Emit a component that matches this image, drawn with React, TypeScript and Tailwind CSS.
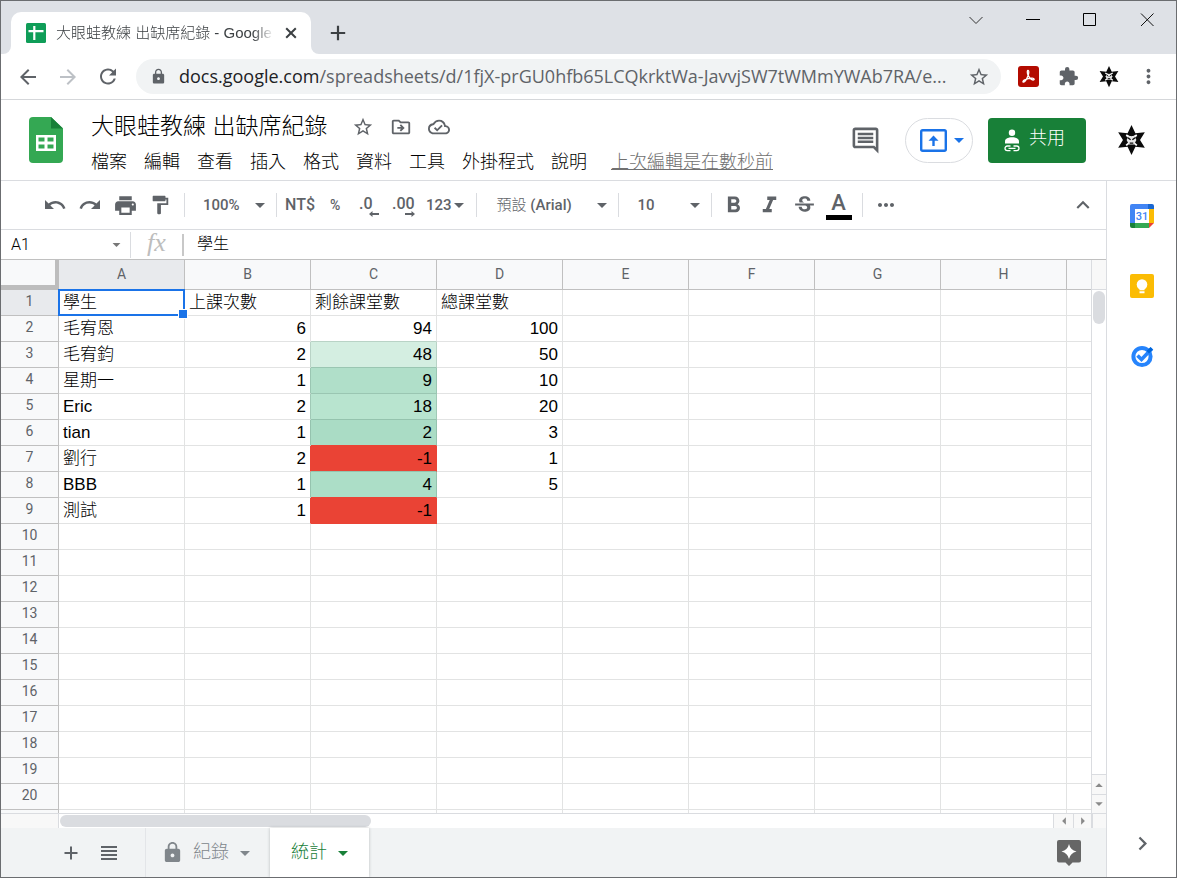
import { clsx } from "clsx";
import type { ReactNode } from "react";
import {
  MdAdd,
  MdArrowBack,
  MdArrowDropDown,
  MdArrowForward,
  MdClose,
  MdExpandLess,
  MdExtension,
  MdFormatBold,
  MdFormatItalic,
  MdFormatPaint,
  MdLock,
  MdChevronRight,
  MdMoreHoriz,
  MdMoreVert,
  MdOutlineCloudDone,
  MdOutlineDriveFileMove,
  MdOutlineInsertComment,
  MdPrint,
  MdRedo,
  MdRefresh,
  MdStarBorder,
  MdStrikethroughS,
  MdUndo,
} from "react-icons/md";

const menus = ["檔案", "編輯", "查看", "插入", "格式", "資料", "工具", "外掛程式", "說明"];
const columns = ["A", "B", "C", "D", "E", "F", "G", "H", "I"];

// `edge` colours the line left of column C, `line` the line below it.
type Row = { cells: string[]; fill?: string; line?: string; edge?: string };

const rows: Row[] = [
  { cells: ["學生", "上課次數", "剩餘課堂數", "總課堂數"] },
  { cells: ["毛宥恩", "6", "94", "100"], line: "border-b-[#b9d3c6]" },
  { cells: ["毛宥鈞", "2", "48", "50"], fill: "bg-[#d4eee1] border-r-[#b9d3c6]", line: "border-b-[#9ac6b2]", edge: "border-r-[#b9d3c6]" },
  { cells: ["星期一", "1", "9", "10"], fill: "bg-[#b0dfc9] border-r-[#9ac6b2]", line: "border-b-[#9ac6b2]", edge: "border-r-[#9ac6b2]" },
  { cells: ["Eric", "2", "18", "20"], fill: "bg-[#b8e4cf] border-r-[#a0c9b6]", line: "border-b-[#95c3ae]", edge: "border-r-[#a0c9b6]" },
  { cells: ["tian", "1", "2", "3"], fill: "bg-[#aadcc5] border-r-[#95c3ae]", line: "border-b-[#ea4335]", edge: "border-r-[#95c3ae]" },
  { cells: ["劉行", "2", "-1", "1"], fill: "bg-[#ea4335] border-r-[#ea4335]", line: "border-b-[#95c3ae]", edge: "border-r-[#ea4335]" },
  { cells: ["BBB", "1", "4", "5"], fill: "bg-[#acdec7] border-r-[#95c3ae]", line: "border-b-[#ea4335]", edge: "border-r-[#95c3ae]" },
  { cells: ["測試", "1", "-1", ""], fill: "bg-[#ea4335] border-r-[#ea4335]", line: "border-b-[#ea4335]", edge: "border-r-[#ea4335]" },
  ...Array.from({ length: 12 }, () => ({ cells: [] })),
];

function NinjaStar({ className }: { className?: string }) {
  return (
    <svg viewBox="0 0 32 36" className={className} aria-hidden="true">
      <path d="M16 1 20.400 10.500 31 9.200 25.600 18 31 26.800 20.400 25.500 16 35 11.600 25.500 1 26.800 6.400 18 1 9.200 11.600 10.500Z" fill="#0b0b0b" />
      <path d="M10 12.500l3.500 2M22 12.500l-3.500 2M10 24l3-2.500M22 24l-3-2.500" stroke="#fff" strokeWidth="2" />
      <path d="M12.500 13.500h7l2 4.500-2.500 5h-6l-2.500-5Z" fill="#e8e8e8" />
      <path d="M12 15.500l3 2.200M20 15.500l-3 2.200M14 21.500h4" stroke="#0b0b0b" strokeWidth="1.600" />
      <path d="M14 11h4l-2 3Z" fill="#0b0b0b" />
    </svg>
  );
}

function Divider() {
  return <span className="h-6 w-px shrink-0 bg-[#dadce0]" />;
}

function IconButton({ label, children, className }: { label: string; children: ReactNode; className?: string }) {
  return (
    <button type="button" aria-label={label} className={clsx("flex shrink-0 items-center justify-center", className)}>
      {children}
    </button>
  );
}

function BrowserTabs() {
  return (
    <div className="flex h-[53px] shrink-0 items-end bg-[#dee1e6]">
      <div className="h-2 w-[10px] shrink-0 bg-white">
        <div className="size-full rounded-br-lg bg-[#dee1e6]" />
      </div>
      <div className="flex h-[42px] w-[300px] shrink-0 items-center rounded-t-[10px] bg-white pl-[15px]">
        <svg viewBox="0 0 20 20" className="size-5 shrink-0" aria-hidden="true">
          <rect width="20" height="20" rx="1.500" fill="#0f9d58" />
          <path d="M2.500 8.200h15M8.300 3v14" stroke="#fff" strokeWidth="2.200" />
        </svg>
        <span className="ml-[10px] w-[218px] overflow-hidden text-[15px] whitespace-nowrap text-[#3c4043] [mask-image:linear-gradient(to_right,black_90%,transparent)]">
          大眼蛙教練 出缺席紀錄 - Google
        </span>
        <IconButton label="關閉分頁" className="ml-[7px] size-5 text-[#3c4043]">
          <svg viewBox="0 0 12 12" className="size-3" stroke="currentColor" strokeWidth="2">
            <path d="M1.200 1.200l9.600 9.600M10.800 1.200 1.200 10.800" />
          </svg>
        </IconButton>
      </div>
      <div className="h-2 w-[10px] shrink-0 bg-white">
        <div className="size-full rounded-bl-lg bg-[#dee1e6]" />
      </div>
      <IconButton label="新增分頁" className="mb-[9px] ml-[5px] size-6 text-[#3c4043]">
        <svg viewBox="0 0 16 16" className="size-4" stroke="currentColor" strokeWidth="2.200">
          <path d="M8 .8v14.400M.8 8h14.400" />
        </svg>
      </IconButton>
      <div className="mb-[26px] ml-auto flex items-center gap-[41px] pr-[21px]">
        <IconButton label="搜尋分頁">
          <svg viewBox="0 0 16 16" className="size-4" fill="none" stroke="#333">
            <path d="M1.500 5 8 11.500 14.500 5" />
          </svg>
        </IconButton>
        <IconButton label="最小化">
          <svg viewBox="0 0 16 16" className="size-4" fill="none" stroke="#000">
            <path d="M1 7.500h14" />
          </svg>
        </IconButton>
        <IconButton label="最大化">
          <svg viewBox="0 0 16 16" className="size-4" fill="none" stroke="#000">
            <path d="M1.500 1.500h12v12h-12z" />
          </svg>
        </IconButton>
        <IconButton label="關閉">
          <svg viewBox="0 0 16 16" className="size-4" fill="none" stroke="#111">
            <path d="M2 1.500l12.500 12.500M14.500 1.500 2 14" />
          </svg>
        </IconButton>
      </div>
    </div>
  );
}

function AddressBar() {
  return (
    <div className="flex h-[46px] shrink-0 items-center border-b border-[#d5d7da] bg-white pl-[15px] text-[#5f6368]">
      <IconButton label="上一頁" className="size-6">
        <MdArrowBack size={24} />
      </IconButton>
      <IconButton label="下一頁" className="ml-4 size-6 text-[#bdc1c6]">
        <MdArrowForward size={24} />
      </IconButton>
      <IconButton label="重新載入" className="ml-4 size-6">
        <MdRefresh size={25} />
      </IconButton>
      <div className="ml-4 flex h-[35px] min-w-0 flex-1 items-center rounded-full bg-[#f1f3f4] pr-[11px] pl-[14px]">
        <MdLock size={17} className="shrink-0" />
        <span className="ml-3 min-w-0 flex-1 truncate font-['Open_Sans','Noto_Sans',sans-serif] text-[18px] font-normal">
          <span className="text-[#202124]">docs.google.com</span>/spreadsheets/d/1fjX-prGU0hfb65LCQkrktWa-JavvjSW7tWMmYWAb7RA/e...
        </span>
        <IconButton label="加入書籤" className="ml-1">
          <MdStarBorder size={22} />
        </IconButton>
      </div>
      <IconButton label="Adobe Acrobat" className="ml-[17px]">
        <svg viewBox="0 0 21 21" className="size-[21px]">
          <rect width="21" height="21" rx="3" fill="#b30b00" />
          <path
            d="M10 4.500c1.200 0 .9 2.700.1 5C9 12.300 7.200 16 5.600 16.200c-1.200 0-.8-1.400 1.100-2.300 2.300-1.100 5.300-1.800 7.500-1.700 2.500.1 2.400 1.900.8 1.800-2.200-.2-4.900-3.700-5.500-6.500C9.200 5.900 9.200 4.500 10 4.500Z"
            fill="none"
            stroke="#fff"
            strokeWidth="1.300"
          />
        </svg>
      </IconButton>
      <IconButton label="擴充功能" className="ml-[19px]">
        <MdExtension size={21} />
      </IconButton>
      <IconButton label="個人資料" className="ml-5">
        <NinjaStar className="h-[23px] w-5" />
      </IconButton>
      <IconButton label="更多" className="mr-4 ml-[18px]">
        <MdMoreVert size={23} />
      </IconButton>
    </div>
  );
}

function DocHeader() {
  return (
    <header className="flex h-[81px] shrink-0 border-b border-[#dadce0] bg-white pr-[30px] pl-7">
      <svg viewBox="0 0 34 46" className="mt-[17px] h-[46px] w-[34px] shrink-0" aria-hidden="true">
        <path d="M4 0h18l12 11.500V42a4 4 0 0 1-4 4H4a4 4 0 0 1-4-4V4a4 4 0 0 1 4-4Z" fill="#34a853" />
        <path d="M22 0l12 11.500H22Z" fill="#188038" />
        <path d="M7 18h20v16H7Zm2.500 2.500v4h6v-4Zm9 0v4h6v-4Zm-9 7v4h6v-4Zm9 0v4h6v-4Z" fill="#fff" fillRule="evenodd" />
      </svg>
      <div className="ml-[28px] min-w-0 flex-1">
        <div className="flex h-[50px] items-center pt-[3px] text-[#5f6368]">
          <h1 className="text-[23px] whitespace-nowrap text-black">大眼蛙教練 出缺席紀錄</h1>
          <div className="ml-[25px] flex items-center gap-4">
            <IconButton label="加星號">
              <MdStarBorder size={22} />
            </IconButton>
            <IconButton label="移動">
              <MdOutlineDriveFileMove size={22} />
            </IconButton>
            <IconButton label="查看文件狀態">
              <MdOutlineCloudDone size={22} />
            </IconButton>
          </div>
        </div>
        <nav className="flex items-center gap-[17px] text-[18px] leading-6 whitespace-nowrap text-black">
          {menus.map((m) => (
            <button type="button" key={m}>
              {m}
            </button>
          ))}
          <a href="#history" className="ml-[7px] text-[#707070] underline">
            上次編輯是在數秒前
          </a>
        </nav>
      </div>
      <div className="flex items-center">
        <IconButton label="開啟註解記錄" className="text-[#5f6368]">
          <MdOutlineInsertComment size={31} />
        </IconButton>
        <button type="button" aria-label="分享螢幕畫面" className="ml-6 flex h-[45px] w-[68px] items-center rounded-full border border-[#dadce0] pl-[14px] text-[#1a73e8]">
          <svg viewBox="0 0 27 23" className="h-[23px] w-[27px] shrink-0" fill="none" stroke="currentColor">
            <rect x="1.200" y="1.200" width="24.600" height="20.600" rx="1.500" strokeWidth="2.400" />
            <path d="M13.500 17V8.500" strokeWidth="2.400" />
            <path d="M8.500 11.700 13.500 6.500l5 5.200Z" fill="currentColor" stroke="none" />
          </svg>
          <MdArrowDropDown size={24} className="shrink-0" />
        </button>
        <button type="button" className="ml-[15px] flex h-[45px] w-[98px] items-center rounded bg-[#188038] pl-[15px] text-[18px] text-white">
          <svg viewBox="0 0 18 24" className="mt-px h-6 w-[18px]" fill="none" stroke="#fff">
            <circle cx="9" cy="3.800" r="3.200" fill="#fff" stroke="none" />
            <path d="M2 14.500v-2.300C2 9.900 5 8.300 9 8.300s7 1.600 7 3.900v2.300Z" fill="#fff" stroke="none" />
            <path d="M7.500 17H4.300a2.300 2.300 0 0 0 0 4.600h3.200M10.500 17h3.200a2.300 2.300 0 0 1 0 4.600h-3.200M5.500 19.300h7" strokeWidth="1.300" />
          </svg>
          <span className="mb-[3px] ml-2">共用</span>
        </button>
        <NinjaStar className="ml-[31px] h-[32px] w-[29px]" />
      </div>
    </header>
  );
}

function Toolbar() {
  return (
    <div className="flex h-[49px] shrink-0 items-center border-b border-[#dadce0] bg-white pl-[42px] font-['Roboto','Noto_Sans_CJK_TC',sans-serif] text-[15px] font-medium text-[#5f6368]">
      <div className="flex items-center gap-[11px]">
        <IconButton label="復原">
          <MdUndo size={24} />
        </IconButton>
        <IconButton label="取消復原">
          <MdRedo size={24} />
        </IconButton>
        <IconButton label="列印">
          <MdPrint size={25} />
        </IconButton>
        <IconButton label="套用格式">
          <MdFormatPaint size={22} />
        </IconButton>
      </div>
      <div className="ml-[13px] flex items-center">
        <Divider />
        <button type="button" className="ml-[18px] flex items-center">
          <span className="w-[45px] text-left">100%</span>
          <MdArrowDropDown size={24} />
        </button>
        <span className="ml-[4px]" />
        <Divider />
        <button type="button" className="ml-2 w-[36px] text-left text-base">NT$</button>
        <button type="button" className="ml-[9px] w-[29px] text-left text-sm">%</button>
        <button type="button" aria-label="減少小數位數" className="w-[33px] text-left text-base">
          <span className="block leading-5">.0</span>
          <svg viewBox="0 0 10 6" className="-mt-[3px] ml-[10px] h-[6px] w-[10px]" fill="currentColor"><path d="M0 3l3.500-3v2H10v2H3.500v2Z" /></svg>
        </button>
        <button type="button" aria-label="增加小數位數" className="w-[34px] text-left text-base">
          <span className="block leading-5">.00</span>
          <svg viewBox="0 0 10 6" className="-mt-[3px] ml-[13px] h-[6px] w-[10px]" fill="currentColor"><path d="M10 3 6.500 0v2H0v2h6.500v2Z" /></svg>
        </button>
        <button type="button" className="flex items-center">
          123
          <MdArrowDropDown size={24} className="-ml-[5px]" />
        </button>
        <span className="ml-[5px]" />
        <Divider />
        <button type="button" className="ml-5 flex items-center">
          <span className="w-[93px] text-left whitespace-nowrap">
            <span className="font-light">預設</span> (Arial)
          </span>
          <MdArrowDropDown size={24} />
        </button>
        <span className="ml-[4px]" />
        <Divider />
        <button type="button" className="ml-[19px] flex items-center">
          <span className="w-[45px] text-left">10</span>
          <MdArrowDropDown size={24} />
        </button>
        <span className="ml-[4px]" />
        <Divider />
      </div>
      <div className="ml-2 flex items-center gap-[9px]">
        <IconButton label="粗體">
          <MdFormatBold size={27} />
        </IconButton>
        <IconButton label="斜體">
          <MdFormatItalic size={27} />
        </IconButton>
        <IconButton label="刪除線">
          <MdStrikethroughS size={25} />
        </IconButton>
        <IconButton label="文字顏色" className="w-[26px] flex-col">
          <span className="text-[22px] leading-6">A</span>
          <span className="h-[5px] w-full bg-black" />
        </IconButton>
      </div>
      <span className="ml-[10px]" />
      <Divider />
      <IconButton label="更多" className="ml-[11px]">
        <MdMoreHoriz size={24} />
      </IconButton>
      <IconButton label="隱藏選單" className="mr-[10px] ml-auto">
        <MdExpandLess size={26} />
      </IconButton>
    </div>
  );
}

function FormulaBar() {
  return (
    <div className="flex h-[30px] shrink-0 items-center border-b border-[#c0c0c0] bg-white">
      <input aria-label="名稱方塊" defaultValue="A1" className="ml-[10px] w-[94px] font-['Roboto',sans-serif] text-base text-black outline-none" />
      <MdArrowDropDown size={19} className="mr-[4px] ml-[2px] shrink-0 text-[#777]" />
      <span className="h-[26px] w-px bg-[#dadce0]" />
      <span className="mb-1 w-[51px] text-center font-['Liberation_Serif',serif] text-[26px] leading-6 text-[#bdbdbd] italic">fx</span>
      <span className="h-[22px] w-[2px] shrink-0 bg-[#c8c8c8]" />
      <input aria-label="公式" defaultValue="學生" className="mb-px ml-[13px] min-w-0 flex-1 text-base text-black outline-none" />
    </div>
  );
}

function Grid() {
  return (
    <table className="w-max table-fixed border-separate border-spacing-0">
      <colgroup>
        <col className="w-[58px]" />
        {columns.map((c) => (
          <col key={c} className="w-[126px]" />
        ))}
      </colgroup>
      <thead>
        <tr className="h-[30px]">
          <th className="w-[58px] border-r-4 border-b-[5px] border-[#bdbdbd] bg-[#f8f9fa]" aria-label="全選" />
          {columns.map((c) => (
            <th
              key={c}
              scope="col"
              className={clsx(
                "w-[126px] border-r border-b border-[#c0c0c0] pb-[2px] font-['Roboto',sans-serif] text-sm font-normal text-[#5f6368]",
                c === "A" ? "bg-[#e8eaed]" : "bg-[#f8f9fa]",
              )}
            >
              {c}
            </th>
          ))}
        </tr>
      </thead>
      <tbody>
        {rows.map((row, r) => (
          <tr key={r} className="h-[26px]">
            <th
              scope="row"
              className={clsx(
                "border-r border-b border-[#c0c0c0] pb-[3px] font-['Roboto',sans-serif] text-sm leading-5 font-normal text-[#5f6368]",
                r === 0 ? "bg-[#e8eaed]" : "bg-[#f8f9fa]",
              )}
            >
              {r + 1}
            </th>
            {columns.map((c, i) => {
              const right = i === 1 ? row.edge : i === 2 ? row.fill : undefined;
              const bottom = i === 2 ? row.line : undefined;
              return (
                <td
                  key={c}
                  className={clsx(
                    "relative border-r border-b px-1 pt-px text-[17px] leading-6 whitespace-nowrap text-black",
                    right ?? "border-r-[#e2e3e3]",
                    bottom ?? "border-b-[#e2e3e3]",
                    r > 0 && i > 0 && "text-right",
                  )}
                >
                  {row.cells[i] ?? ""}
                  {r === 0 && i === 0 && (
                    <span className="pointer-events-none absolute -top-px -right-px -bottom-px -left-px z-10 border-2 border-[#1a73e8]">
                      <span className="absolute -right-[5px] -bottom-[5px] size-[10px] border border-white bg-[#1a73e8]" />
                    </span>
                  )}
                </td>
              );
            })}
          </tr>
        ))}
      </tbody>
    </table>
  );
}

function ScrollArrow({ label, path, className }: { label: string; path: string; className?: string }) {
  return (
    <IconButton label={label} className={clsx("border-[#dadce0] bg-[#f8f8f8]", className)}>
      <svg viewBox="0 0 8 8" className="size-[10px]" fill="#8a8a8a">
        <path d={path} />
      </svg>
    </IconButton>
  );
}

function SheetTabs() {
  return (
    <footer className="flex h-[49px] shrink-0 items-center bg-[#f1f3f4] pl-[59px] text-[#5f6368]">
      <IconButton label="新增工作表" className="size-[22px]">
        <svg viewBox="0 0 14 14" className="size-[14px]" stroke="currentColor" strokeWidth="2">
          <path d="M7 .5v13M.5 7h13" />
        </svg>
      </IconButton>
      <IconButton label="所有工作表" className="ml-[19px]">
        <svg viewBox="0 0 16 14" className="h-[14px] w-4" stroke="currentColor" strokeWidth="2">
          <path d="M0 1h16M0 5h16M0 9h16M0 13h16" />
        </svg>
      </IconButton>
      <button type="button" className="ml-[28px] flex h-full w-[125px] items-center border-l border-[#e3e5e8] pl-[15px] text-[18px] text-[#80868b]">
        <MdLock size={23} />
        <span className="ml-[9px] whitespace-nowrap">紀錄</span>
        <MdArrowDropDown size={24} className="ml-1" />
      </button>
      <button type="button" className="flex h-full w-[99px] items-center bg-white pl-[21px] text-[18px] text-[#188038] shadow-[0_0_3px_rgba(60,64,67,0.3)]">
        <span className="whitespace-nowrap">統計</span>
        <MdArrowDropDown size={24} className="ml-1" />
      </button>
      <IconButton label="探索" className="mr-[25px] ml-auto">
        <svg viewBox="0 0 24 26" className="h-[26px] w-6">
          <path d="M2 0h20a2 2 0 0 1 2 2v18.500a2 2 0 0 1-2 2h-6.500L12 26l-3.500-3.500H2a2 2 0 0 1-2-2V2a2 2 0 0 1 2-2Z" fill="#666" />
          <path d="M12 4q1.300 6 7.500 7.500Q13.300 13 12 19q-1.300-6-7.500-7.500Q10.700 10 12 4Z" fill="#fff" />
        </svg>
      </IconButton>
    </footer>
  );
}

function SidePanel() {
  return (
    <aside className="flex w-[70px] shrink-0 flex-col items-center border-l border-[#dadce0] bg-white pt-[23px] pb-5 pl-px">
      <IconButton label="日曆">
        <svg viewBox="0 0 24 24" className="size-6">
          <path d="M0 2a2 2 0 0 1 2-2h16v5H5v14H0Z" fill="#4285f4" />
          <path d="M18 0h4a2 2 0 0 1 2 2v3h-6Z" fill="#1967d2" />
          <path d="M18.500 5H24v14h-5.500Z" fill="#fbbc04" />
          <path d="M0 19h5v5H2a2 2 0 0 1-2-2Z" fill="#188038" />
          <path d="M5 19h14v5H5Z" fill="#34a853" />
          <path d="M19 19h5l-5 5Z" fill="#ea4335" />
          <path d="M5 5h14v14H5Z" fill="#fff" />
          <text x="12" y="16" textAnchor="middle" fontFamily="Roboto, sans-serif" fontWeight="500" fontSize="11" fill="#4285f4">31</text>
        </svg>
      </IconButton>
      <IconButton label="Keep" className="mt-[46px]">
        <svg viewBox="0 0 24 24" className="size-6">
          <rect width="24" height="24" rx="2" fill="#fbbc04" />
          <circle cx="12" cy="10.500" r="5.300" fill="#fff" />
          <path d="M9.500 14h5v2.200h-5ZM9.500 17.300h5v2h-5Z" fill="#fff" />
        </svg>
      </IconButton>
      <IconButton label="Tasks" className="mt-[46px]">
        <svg viewBox="0 0 24 24" className="size-6" fill="none">
          <circle cx="12" cy="12.500" r="8.600" stroke="#2684fc" strokeWidth="4" />
          <path d="M7.500 11.500l4 4L22 4.500" stroke="#2684fc" strokeWidth="3.600" />
          <path d="M16.500 7 20.500 3 23 5.500 19 9.500Z" fill="#0066da" />
        </svg>
      </IconButton>
      <IconButton label="隱藏側邊面板" className="mt-auto text-[#5f6368]">
        <MdChevronRight size={27} />
      </IconButton>
    </aside>
  );
}

export default function App() {
  return (
    <div className="flex h-screen flex-col overflow-hidden border border-[#6b6d70] bg-white font-['Liberation_Sans','Noto_Sans_CJK_TC',sans-serif] font-light">
      <BrowserTabs />
      <AddressBar />
      <DocHeader />
      <div className="flex min-h-0 flex-1">
        <main className="flex min-w-0 flex-1 flex-col">
          <Toolbar />
          <FormulaBar />
          <div className="flex min-h-0 flex-1">
            <div className="min-w-0 flex-1 overflow-hidden">
              <Grid />
            </div>
            <div className="flex w-[15px] shrink-0 flex-col border-l border-[#dadce0]">
              <div className="h-[30px] border-b border-[#dadce0] bg-[#f8f8f8]" />
              <div className="flex-1 px-px pt-px">
                <div className="h-[33px] rounded-full bg-[#dadce0]" />
              </div>
              <ScrollArrow label="向上捲動" path="M1 5.500 4 2.500l3 3Z" className="h-5 border-t" />
              <ScrollArrow label="向下捲動" path="M1 2.500h6l-3 3Z" className="h-[19px] border-t" />
            </div>
          </div>
          <div className="flex h-[15px] shrink-0 border-t border-[#dadce0]">
            <div className="w-[58px] border-r border-[#dadce0] bg-[#f8f8f8]" />
            <div className="flex-1 px-px py-px">
              <div className="h-3 w-[311px] rounded-full bg-[#dadce0]" />
            </div>
            <ScrollArrow label="向左捲動" path="M5.500 1v6l-3-3Z" className="w-5 border-l" />
            <ScrollArrow label="向右捲動" path="M2.500 1v6l3-3Z" className="w-[18px] border-l" />
            <div className="w-[15px] border-l-2 border-[#dadce0] bg-[#f8f8f8]" />
          </div>
          <SheetTabs />
        </main>
        <SidePanel />
      </div>
    </div>
  );
}
